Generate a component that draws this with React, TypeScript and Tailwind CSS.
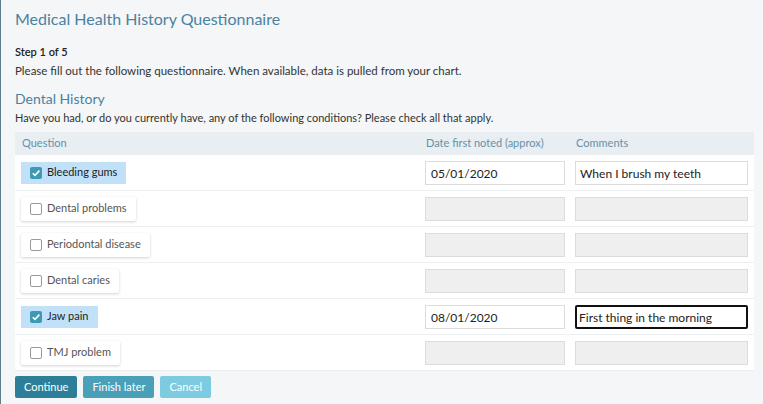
import { useState } from 'react'

interface Row {
  label: string
  checked: boolean
  date: string
  comment: string
  focused?: boolean
}

const initialRows: Row[] = [
  { label: 'Bleeding gums', checked: true, date: '05/01/2020', comment: 'When I brush my teeth' },
  { label: 'Dental problems', checked: false, date: '', comment: '' },
  { label: 'Periodontal disease', checked: false, date: '', comment: '' },
  { label: 'Dental caries', checked: false, date: '', comment: '' },
  { label: 'Jaw pain', checked: true, date: '08/01/2020', comment: 'First thing in the morning', focused: true },
  { label: 'TMJ problem', checked: false, date: '', comment: '' },
]

function CheckBox({ checked }: { checked: boolean }) {
  if (checked) {
    return (
      <span className="flex h-[12px] w-[12px] items-center justify-center rounded-[2px] bg-[#3c9ab4]">
        <svg width="10" height="10" viewBox="0 0 10 10">
          <path d="M1.8 5.2 L4 7.4 L8.4 2.6" fill="none" stroke="white" strokeWidth="1.6" />
        </svg>
      </span>
    )
  }
  return <span className="h-[12px] w-[12px] rounded-[2px] border border-[#9a9a9a] bg-white" />
}

export default function App() {
  const [rows, setRows] = useState(initialRows)

  const toggle = (i: number) => {
    setRows(rows.map((r, idx) => (idx === i ? { ...r, checked: !r.checked } : r)))
  }

  return (
    <div className="h-[404px] w-[763px] overflow-hidden border-l border-[#5f7d8c] bg-[#f4f6f8] pl-[14px] pr-[9px] text-[#333] font-['Lato',sans-serif]">
      <h1 className="pt-[8px] text-[16px] leading-[22px] text-[#4a82a0]">Medical Health History Questionnaire</h1>

      <p className="mt-[15px] text-[11px] font-semibold leading-[14px] text-[#222]">Step 1 of 5</p>
      <p className="mt-[5px] text-[11.5px] leading-[14px]">
        Please fill out the following questionnaire. When available, data is pulled from your chart.
      </p>

      <h2 className="mt-[12px] text-[14px] leading-[18px] text-[#4a82a0]">Dental History</h2>
      <p className="mt-[3px] text-[11px] leading-[14px]">
        Have you had, or do you currently have, any of the following conditions? Please check all that apply.
      </p>

      <div className="mt-[7px] w-[739px]">
        <div className="grid h-[23px] grid-cols-[410px_150px_1fr] items-center bg-[#e8eef2] text-[11px] text-[#6591a8]">
          <span className="pl-[7px]">Question</span>
          <span className="pl-[1px]">Date first noted (approx)</span>
          <span className="pl-[1px]">Comments</span>
        </div>

        {rows.map((r, i) => (
          <div
            key={r.label}
            className="grid h-[36px] grid-cols-[410px_150px_1fr] items-center border-b border-[#eceff1] bg-white"
          >
            <div className="pl-[6px]">
              <button
                onClick={() => toggle(i)}
                className={
                  r.checked
                    ? 'flex h-[22px] items-center gap-[5px] bg-[#c0e1f7] pl-[9px] pr-[9px] text-[11px] text-[#222]'
                    : 'flex h-[24px] items-center gap-[5px] rounded-[2px] bg-white pl-[9px] pr-[9px] text-[11px] text-[#555] shadow-[0_1px_3px_rgba(0,0,0,0.18)]'
                }
              >
                <CheckBox checked={r.checked} />
                <span>{r.label}</span>
              </button>
            </div>
            <div>
              <input
                readOnly
                value={r.date}
                disabled={!r.checked}
                className={
                  r.checked
                    ? 'h-[24px] w-[140px] border border-[#dcdcdc] bg-white px-[5px] text-[12px] text-[#222] outline-none'
                    : 'h-[24px] w-[140px] border border-[#dcdcdc] bg-[#efefef] px-[5px] outline-none'
                }
              />
            </div>
            <div>
              <input
                readOnly
                value={r.comment}
                disabled={!r.checked}
                className={
                  r.focused
                    ? 'h-[24px] w-[173px] rounded-[2px] border-2 border-[#111] bg-white px-[2px] text-[12px] text-[#222] outline-none'
                    : r.checked
                      ? 'h-[24px] w-[173px] border border-[#dcdcdc] bg-white px-[4px] text-[12px] text-[#222] outline-none'
                      : 'h-[24px] w-[173px] border border-[#dcdcdc] bg-[#efefef] px-[4px] outline-none'
                }
              />
            </div>
          </div>
        ))}
      </div>

      <div className="mt-[5px] flex gap-[6px] text-[11px] text-white">
        <button className="h-[22px] rounded-[2px] bg-[#2d7f99] px-[9px]">Continue</button>
        <button className="h-[22px] rounded-[2px] bg-[#4aa0b8] px-[9px]">Finish later</button>
        <button className="h-[22px] rounded-[2px] bg-[#7ccbe0] px-[9px]">Cancel</button>
      </div>
    </div>
  )
}
